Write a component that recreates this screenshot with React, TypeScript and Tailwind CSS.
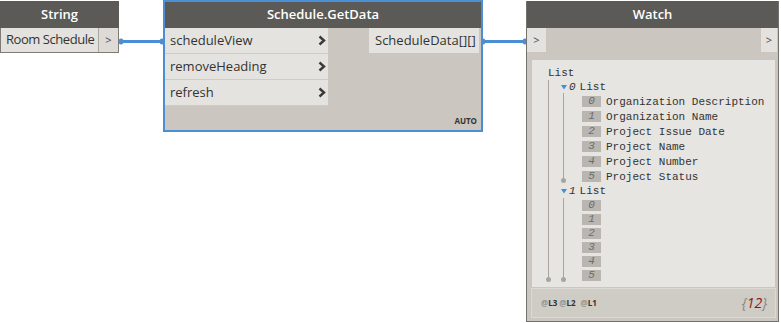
import React from "react";

const Chevron = () => (
  <svg width="8" height="11" viewBox="0 0 8 11" className="shrink-0">
    <polyline points="1.5,1.5 6,5.5 1.5,9.5" fill="none" stroke="#3a3a3a" strokeWidth="2.4" />
  </svg>
);

const Tri = () => (
  <svg width="6" height="5" viewBox="0 0 6 5" className="shrink-0">
    <polygon points="0,0 6,0 3,4.5" fill="#3d8fdc" />
  </svg>
);

const Item = ({ idx, text, h }: { idx: number; text?: string; h: string }) => (
  <div className={`flex items-center pl-[34px] ${h}`}>
    <div className="w-[19px] h-[11px] bg-[#b9b6b1] text-[#6f6c67] italic flex items-center justify-center leading-none">
      {idx}
    </div>
    {text && <span className="ml-[5px] text-[#333] whitespace-nowrap">{text}</span>}
  </div>
);

const Dot = ({ top, left }: { top: string; left: string }) => (
  <div className={`absolute w-[5px] h-[5px] rounded-full bg-[#a8a5a0] ${top} ${left}`} />
);

export default function App() {
  const items0 = [
    "Organization Description",
    "Organization Name",
    "Project Issue Date",
    "Project Name",
    "Project Number",
    "Project Status",
  ];
  return (
    <div className="relative w-[781px] h-[323px] bg-white overflow-hidden font-['Open_Sans',sans-serif]">
      {/* wires */}
      <svg className="absolute left-0 top-0" width="781" height="323">
        <line x1="120" y1="41.5" x2="163" y2="41.5" stroke="#4a8fd6" strokeWidth="3" />
        <ellipse cx="121" cy="41.5" rx="2.5" ry="3" fill="#4a8fd6" />
        <ellipse cx="162" cy="41.5" rx="2.5" ry="3" fill="#4a8fd6" />
        <line x1="482" y1="41.5" x2="526" y2="41.5" stroke="#4a8fd6" strokeWidth="3" />
        <ellipse cx="483" cy="41.5" rx="2.5" ry="3" fill="#4a8fd6" />
        <ellipse cx="525" cy="41.5" rx="2.5" ry="3" fill="#4a8fd6" />
      </svg>

      {/* String node */}
      <div className="absolute left-0 top-[1px] w-[119px] flex flex-col">
        <div className="h-[27px] bg-[#5c5a56] text-white text-[13px] font-semibold flex items-center justify-center">
          String
        </div>
        <div className="flex h-[25px] border-l border-r border-b border-[#7f7c77]">
          <div className="w-[97px] bg-[#e4e2de] pl-[5px] text-[13px] tracking-[-0.45px] text-[#333] flex items-center whitespace-nowrap">
            Room Schedule
          </div>
          <div className="flex-1 bg-[#dedbd6] border-l border-[#aaa6a0] text-[11px] text-[#444] flex items-center justify-center">
            &gt;
          </div>
        </div>
      </div>

      {/* Schedule.GetData node */}
      <div className="absolute left-[163px] top-0 w-[320px] h-[132px] border-2 border-[#4a8fd6] bg-[#cbc7c0] flex flex-col">
        <div className="h-[26px] shrink-0 bg-[#5c5a56] text-white text-[13px] font-semibold flex items-center justify-center">
          Schedule.GetData
        </div>
        <div className="relative flex-1 flex justify-between">
          <div className="w-[163px] flex flex-col">
            {["scheduleView", "removeHeading", "refresh"].map((t) => (
              <div
                key={t}
                className="h-[26px] bg-[#e5e3df] border-b border-[#cfcbc5] flex items-center justify-between pl-[5px] pr-[2px] text-[13px] text-[#333]"
              >
                <span>{t}</span>
                <Chevron />
              </div>
            ))}
          </div>
          <div className="w-[110px] h-[25px] mr-[2px] bg-[#e5e3df] pl-[6px] text-[13px] text-[#333] flex items-center whitespace-nowrap">
            ScheduleData[][]
          </div>
          <div className="absolute right-[4px] bottom-[5px] text-[8px] font-bold text-[#333] leading-none">
            AUTO
          </div>
        </div>
      </div>

      {/* Watch node */}
      <div className="absolute left-[526px] top-[1px] w-[253px] h-[321px] border-l border-r border-b border-[#75726d] bg-[#cbc7c0] flex flex-col">
        <div className="h-[27px] shrink-0 bg-[#5c5a56] text-white text-[13px] font-semibold flex items-center justify-center">
          Watch
        </div>
        <div className="flex justify-between h-[24px] shrink-0">
          <div className="w-[19px] bg-[#e4e2de] text-[11px] text-[#444] flex items-center justify-center">&gt;</div>
          <div className="w-[16px] mr-[1px] bg-[#e4e2de] text-[11px] text-[#444] flex items-center justify-center">&gt;</div>
        </div>
        <div className="relative mt-[8px] ml-[5px] mr-[3px] h-[227px] shrink-0 bg-[#e6e5e1] pl-[16px] pt-[6px] text-[11px] leading-[14px] text-[#333] font-['Liberation_Mono',monospace]">
          <div className="h-[14px]">List</div>
          <div className="relative">
            <div className="absolute left-0 top-0 w-px h-[199px] bg-[#a8a5a0]" />
            <Dot top="top-[197px]" left="left-[-2px]" />
            {/* sublist 0 */}
            <div className="relative">
              <div className="absolute left-[15px] top-[13px] w-px h-[88px] bg-[#a8a5a0]" />
              <Dot top="top-[98px]" left="left-[13px]" />
              <div className="h-[14px] flex items-center pl-[13px]">
                <Tri />
                <span className="ml-[2px] italic">0</span>
                <span className="ml-[4px]">List</span>
              </div>
              {items0.map((t, i) => (
                <Item key={i} idx={i} text={t} h="h-[15px]" />
              ))}
            </div>
            {/* sublist 1 */}
            <div className="relative">
              <div className="absolute left-[15px] top-[14px] w-px h-[81px] bg-[#a8a5a0]" />
              <Dot top="top-[93px]" left="left-[13px]" />
              <div className="h-[14px] flex items-center pl-[13px]">
                <Tri />
                <span className="ml-[2px] italic">1</span>
                <span className="ml-[4px]">List</span>
              </div>
              {[0, 1, 2, 3, 4, 5].map((i) => (
                <Item key={i} idx={i} h="h-[14px]" />
              ))}
            </div>
          </div>
        </div>
        <div className="mt-[1px] ml-[4px] mr-[2px] h-[30px] shrink-0 border border-[#dcd9d4] bg-[#cfcbc5] flex items-center justify-between pl-[9px] pr-[8px]">
          <div className="flex items-center text-[8px] font-bold leading-none">
            <span className="text-[#9a9690]">@</span>
            <span className="text-[#333]">L3</span>
            <span className="ml-[2px] text-[#9a9690]">@</span>
            <span className="text-[#333]">L2</span>
            <span className="ml-[5px] text-[#9a9690]">@</span>
            <span className="text-[#333]">L1</span>
          </div>
          <div className="text-[14px] italic leading-none">
            <span className="text-[#8a8780]">{"{"}</span>
            <span className="text-[#8b1717]">12</span>
            <span className="text-[#8a8780]">{"}"}</span>
          </div>
        </div>
      </div>
    </div>
  );
}
